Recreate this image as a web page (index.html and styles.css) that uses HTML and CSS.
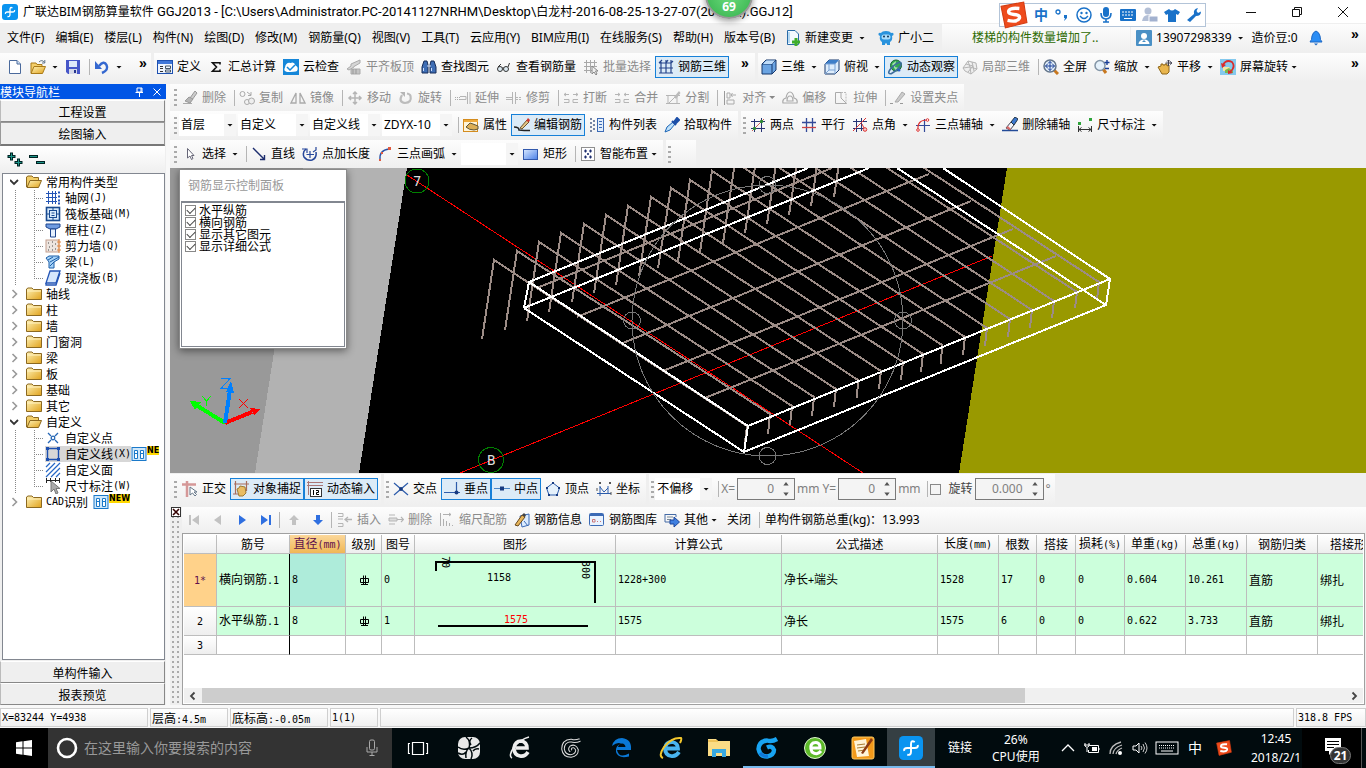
FILE: index.html
```html
<!DOCTYPE html>
<html lang="zh-CN">
<head>
<meta charset="utf-8">
<title>广联达BIM钢筋算量软件 GGJ2013</title>
<link rel="stylesheet" href="styles.css">
</head>
<body>
<svg class="defs" aria-hidden="true">
  <defs>
    <linearGradient id="gf" x1="0" y1="0" x2="1" y2="1"><stop offset="0" stop-color="#fff3b8"/><stop offset="1" stop-color="#e0a21c"/></linearGradient>
    <linearGradient id="gb" x1="0" y1="0" x2="1" y2="1"><stop offset="0" stop-color="#d9e9ff"/><stop offset="1" stop-color="#4a80e8"/></linearGradient>
  </defs>
  <symbol id="app" viewBox="0 0 16 16"><rect width="16" height="16" rx="3" fill="#0a94f0"/><path d="M10.500 4Q8 2.500 8 5.500V10.500Q8 13 5.500 12.500M3.500 10Q3 8 5.500 8H10.500Q13 8 12.500 6" fill="none" stroke="#fff" stroke-width="1.300"/></symbol>
  <symbol id="new" viewBox="0 0 16 16"><path d="M2.500 1.500H10L13.500 5V14.500H2.500Z" fill="#fff" stroke="#4b6a9c"/><path d="M10 1.500V5H13.500" fill="#cfe0f5" stroke="#4b6a9c"/></symbol>
  <symbol id="open" viewBox="0 0 16 16"><path d="M1 14V4H6L7 5.500H12V8" fill="#f4cf6a" stroke="#a97a18"/><path d="M1 14.500L4 7.500H15.500L12.500 14.500Z" fill="url(#gf)" stroke="#a97a18"/><path d="M9 3Q12 0 14.500 3.500M14.800 1V4H12" fill="none" stroke="#5d7187"/></symbol>
  <symbol id="save" viewBox="0 0 16 16"><path d="M1 1H15V15H3L1 13Z" fill="#4656c8"/><rect x="4" y="2" width="8" height="6" fill="#dfe8fa"/><rect x="4" y="10" width="8" height="5" fill="#d6d9e8"/><rect x="9" y="11" width="2" height="3" fill="#27358e"/></symbol>
  <symbol id="undo" viewBox="0 0 16 16"><path d="M5 7Q10 1 12.500 6T8 14" fill="none" stroke="#3568d0" stroke-width="2.500"/><path d="M1 2V10H8Z" fill="#3568d0"/></symbol>
  <symbol id="define" viewBox="0 0 16 16"><rect x=".5" y="1.500" width="15" height="13" fill="#eef4fd" stroke="#1d50b0"/><rect x="1" y="2" width="14" height="3" fill="#3f76d8"/><path d="M3 7.500H6M3 9.500H6M3 12.500H6" stroke="#333"/><path d="M8.500 7H13.500V9.500H8.500ZM8.500 11H13.500V13H8.500Z" fill="none" stroke="#456"/></symbol>
  <symbol id="sigma" viewBox="0 0 16 16"><path d="M12 5.500V3.700H4.500L8.500 8L4.500 12.300H12V10.500" fill="none" stroke="#111" stroke-width="1.600"/></symbol>
  <symbol id="cloud" viewBox="0 0 16 16"><rect width="16" height="16" fill="#1687d9"/><path d="M4 13Q0 12 2 8.500Q3 3 7.500 4Q11 2 12.500 6.500Q16 8 14 12Q12 13 4 13Z" fill="#fff"/><path d="M4 8L7 11L12 6" fill="none" stroke="#1687d9" stroke-width="1.500"/></symbol>
  <symbol id="slab" viewBox="0 0 16 16"><path d="M1 10L5 7V5L14 1V4L8 7.500V8L3 11Z" fill="#d5d5d5" stroke="#aaa"/><path d="M5 10H14V15H5Z" fill="#c4c4c4" stroke="#aaa"/><path d="M7 10V15M10 10V15" stroke="#999"/></symbol>
  <symbol id="bino" viewBox="0 0 16 16"><path d="M3 2H6L7 6V14H1V8ZM10 2H13L15 8V14H9V6Z" fill="#3f6eb5" stroke="#162c58"/><path d="M6 7H10M2.500 9V12M10.500 9V12" stroke="#cfe0ff"/></symbol>
  <symbol id="glass" viewBox="0 0 16 16"><circle cx="4" cy="10" r="2.500" fill="#dceaf2" stroke="#333"/><circle cx="10" cy="10" r="2.500" fill="#dceaf2" stroke="#333"/><path d="M6.500 9Q7 8 7.500 9M2 8L5 5M12 8L13.500 4" fill="none" stroke="#333"/></symbol>
  <symbol id="batch" viewBox="0 0 16 16"><path d="M1 3.500H14M1 7.500H14M1 11.500H9M3.500 1V14M7.500 1V14M11.500 1V8" stroke="#a8a8a8" fill="none"/><path d="M9 7V15L11 13L13 16L14 15L12.500 12H15Z" fill="#eee" stroke="#888"/></symbol>
  <symbol id="cage" viewBox="0 0 16 16"><path d="M1 4H13M1 9H15M1 14H15M3 3V14M8 1V14M13 1V14M1 4L4 1M8 4L10 1M13 4L15 2" fill="none" stroke="#26458b" stroke-width="1.200"/></symbol>
  <symbol id="cube" viewBox="0 0 16 16"><path d="M1 5L5 1H15V11L11 15H1Z" fill="#6ba4e2" stroke="#17386d"/><path d="M1 5H11V15M11 5L15 1" fill="none" stroke="#17386d"/><path d="M2 5L5.500 1.500H14L11 5Z" fill="#bfdcf8"/></symbol>
  <symbol id="top" viewBox="0 0 16 16"><path d="M1 5L5 1H15V11L11 15H1Z" fill="#deedfc" stroke="#17386d"/><path d="M1 5L5 1H15L11 5Z" fill="#3e7fc9"/><path d="M11 5V15M1 5H11L15 1M5 5V11H11M5 11L1 15" fill="none" stroke="#7aa3d5"/></symbol>
  <symbol id="orbit" viewBox="0 0 16 16"><circle cx="9" cy="6.500" r="5.500" fill="#32a852" stroke="#176630"/><path d="M5 5L9 2L8 8L12 9L9 12Z" fill="#a5e3a8"/><ellipse cx="8" cy="9" rx="8" ry="2.500" transform="rotate(-42 8 9)" fill="none" stroke="#3d6d9e" stroke-width="1.500"/><circle cx="12" cy="11" r="1.500" fill="#2c5cc0"/></symbol>
  <symbol id="local" viewBox="0 0 16 16"><path d="M1 9L6 2L14 4L15 10L9 15L3 12ZM6 2L8 8L15 10M1 9L8 8L9 15M4 5L11 7L12 12M10 3L11 7L6 13" fill="#eee" stroke="#b5b5b5"/></symbol>
  <symbol id="full" viewBox="0 0 16 16"><path d="M11 11L15 15" stroke="#c87820" stroke-width="3"/><circle cx="7" cy="7" r="6" fill="#e5f1fb" stroke="#63758a" stroke-width="1.500"/><path d="M7 2.500V11.500M2.500 7H11.500M5 4.500L7 2.500L9 4.500M5 9.500L7 11.500L9 9.500M4.500 5L2.500 7L4.500 9M9.500 5L11.500 7L9.500 9" fill="none" stroke="#173d96"/></symbol>
  <symbol id="zoom" viewBox="0 0 16 16"><path d="M9 10L12 14" stroke="#c87820" stroke-width="3"/><circle cx="6" cy="6.500" r="5" fill="#e5f1fb" stroke="#8395a6" stroke-width="1.500"/><path d="M13 1V6M10.500 3.500H15.500M11 9.500H15" stroke="#173d96" stroke-width="1.400"/></symbol>
  <symbol id="pan" viewBox="0 0 16 16"><path d="M1 8L4 7V5H6V6H8V5H10V7L12 6V13L10 15H5Z" fill="#e9b64e" stroke="#8f671a"/><path d="M11.500 1V7M8.500 4H14.500M10 2.500L11.500 1L13 2.500M13 2.500L15 4L13 5.500" fill="none" stroke="#445"/></symbol>
  <symbol id="rot" viewBox="0 0 16 16"><rect width="16" height="16" fill="#84c9ee"/><path d="M3 8H9L12 12H3Z" fill="#f4e6a0"/><path d="M5 11L9 9L13 12V14H5Z" fill="#7ab852"/><path d="M3 6Q6 0 12 3Q16 8 10 13" fill="none" stroke="#d92b2b" stroke-width="1.700"/><path d="M1 4L2 9L6 6ZM8 11L13 14L8 15Z" fill="#d92b2b"/></symbol>
  <symbol id="gerase" viewBox="0 0 16 16"><path d="M1 13.500H10" stroke="#aaa"/><path d="M8 8L13 1L15 3L10 10Z" fill="#ccc" stroke="#999"/><path d="M3 11L7 7L11 9L8 13Z" fill="#b5b5b5" stroke="#999"/></symbol>
  <symbol id="gcopy" viewBox="0 0 16 16"><circle cx="3.500" cy="4" r="2.500" fill="none" stroke="#aaa"/><circle cx="8" cy="12" r="2.500" fill="none" stroke="#aaa"/><circle cx="12.500" cy="11" r="3" fill="#eee" stroke="#aaa"/><path d="M8 2L12 5M12 2V5.500H9" fill="none" stroke="#aaa"/></symbol>
  <symbol id="gmirror" viewBox="0 0 16 16"><path d="M6 3V13H1ZM10 3V13H15Z" fill="none" stroke="#aaa" stroke-width="1.300"/></symbol>
  <symbol id="gmove" viewBox="0 0 16 16"><path d="M8 2V14M2 8H14M6 4L8 2L10 4M6 12L8 14L10 12M4 6L2 8L4 10M12 6L14 8L12 10" fill="none" stroke="#b5b5b5" stroke-width="1.500"/></symbol>
  <symbol id="grot" viewBox="0 0 16 16"><path d="M4 5Q0 12 7 13Q14 12.500 12.500 6Q12 4 9 3.500" fill="none" stroke="#bcbcbc" stroke-width="2.200"/><path d="M2 2H7V7Z" fill="#b5b5b5"/></symbol>
  <symbol id="gext" viewBox="0 0 16 16"><path d="M0 7.500H5M0 9.500H5" stroke="#aaa" stroke-dasharray="1 1"/><path d="M5 6.500H11V9.500H5M12.500 2V14M15 2V14" fill="none" stroke="#b5b5b5"/></symbol>
  <symbol id="gtrim" viewBox="0 0 16 16"><path d="M0 7.500H6M0 9.500H6M6.500 2V14M9.500 2V14" fill="none" stroke="#b5b5b5"/><path d="M10 7.500H16M10 9.500H16" stroke="#b5b5b5" stroke-dasharray="2 1"/></symbol>
  <symbol id="gbreak" viewBox="0 0 16 16"><path d="M1 4.500H6M3 3L1 4.500L3 6M10 4.500H15M13 3L15 4.500L13 6M1 9.500H6V12.500H1M15 9.500H10V12.500H15" fill="none" stroke="#b5b5b5"/></symbol>
  <symbol id="gjoin" viewBox="0 0 16 16"><path d="M1 4.500H6M4 3L6 4.500L4 6M10 4.500H15M12 3L10 4.500L12 6M1 9.500H6V12.500H1M15 9.500H10V12.500H15" fill="none" stroke="#b5b5b5"/></symbol>
  <symbol id="gsplit" viewBox="0 0 16 16"><path d="M1 5.500H15M1 13.500H15M3 5V13M12 5V13M4 13L14 3" fill="none" stroke="#b5b5b5"/><path d="M9 7L14 1L15.500 3L11 9Z" fill="#bbb"/></symbol>
  <symbol id="galign" viewBox="0 0 16 16"><path d="M2.500 1V15" stroke="#999"/><path d="M5 3H8V8H5ZM5 10H12V14H5ZM14 5H9M10.500 3L9 5L10.500 7" fill="none" stroke="#aaa"/></symbol>
  <symbol id="goff" viewBox="0 0 16 16"><path d="M1 13Q0 9 4 8Q5 2 8 2Q11 2 12 8Q16 9 15 13ZM5 11Q5 6 8 6Q11 6 11 11Z" fill="none" stroke="#aaa" stroke-width="1.200"/></symbol>
  <symbol id="gstr" viewBox="0 0 16 16"><path d="M2.500 2.500H8V8L13.500 13.500H2.500Z" fill="none" stroke="#aaa"/><path d="M8 2.500H13V13" fill="none" stroke="#bbb" stroke-dasharray="2 1"/></symbol>
  <symbol id="ggrip" viewBox="0 0 16 16"><path d="M0 13.500H3M10 13.500H13" stroke="#999"/><path d="M5 12L12 2L15 4L8 12Z" fill="#ccc" stroke="#aaa"/></symbol>
  <symbol id="prop" viewBox="0 0 16 16"><rect x=".5" y="2.500" width="14" height="12" fill="#fff4d8" stroke="#d48c1e"/><path d="M1 3H15V5H1Z" fill="#efaa3a"/><path d="M3 10L7 6L10 7L15 9V12L11 13Q6 13 3 10Z" fill="#dcae55" stroke="#5d5438"/></symbol>
  <symbol id="edit" viewBox="0 0 16 16"><path d="M0 10Q5 10 5 13Q10 13.500 16 13.500" fill="none" stroke="#222" stroke-width="1.500"/><path d="M6 11L13 3L15 5L8 12Z" fill="#e2c487" stroke="#70562c"/><path d="M12 4L14 1L16 3L15 5Z" fill="#cf362e"/></symbol>
  <symbol id="list" viewBox="0 0 16 16"><path d="M1 2H3M1 6H3M1 10H3M1 14H3M4 4H6M4 8H6M4 12H6" stroke="#4a5f88" stroke-width="1.300"/><rect x="8.500" y="1.500" width="6" height="13" fill="#e2edfa" stroke="#3b6ab5"/><path d="M10 4.500H13M10 7.500H13M10 10.500H13" stroke="#3b6ab5"/></symbol>
  <symbol id="pick" viewBox="0 0 16 16"><path d="M1 15L3 10L9 5L11 7L6 13Z" fill="#bfe1fa" stroke="#1b65b6"/><path d="M8 4L12 8M10 5L13 1L15 3L12 6Z" fill="#1c4fa8" stroke="#1c4fa8" stroke-width="2"/></symbol>
  <symbol id="twop" viewBox="0 0 16 16"><path d="M1 4.500H15M1 11.500H15M4.500 2V15M11.500 1V15" stroke="#273374"/><path d="M2 14L14 2" stroke="#cf5f57"/><circle cx="4.500" cy="11.500" r="1.700" fill="#2b8a36"/><circle cx="11.500" cy="4.500" r="1.700" fill="#2b8a36"/></symbol>
  <symbol id="para" viewBox="0 0 16 16"><path d="M1 5.500H15M5.500 1V15M11.500 1V15" stroke="#334a99" stroke-width="1.300"/><path d="M1 10.500H15" stroke="#c44" stroke-width="1.300"/></symbol>
  <symbol id="ang" viewBox="0 0 16 16"><path d="M1 4.500H15M1 11.500H12M4.500 2V15M9.500 1V14" stroke="#273374"/><path d="M1 14L14 1M10 7L13 13" stroke="#d33"/><circle cx="13" cy="12.500" r="1.800" fill="#f5c8c8" stroke="#d33"/></symbol>
  <symbol id="arcx" viewBox="0 0 16 16"><path d="M1 8.500H15M9.500 2V15" stroke="#334a99" stroke-width="1.200"/><path d="M3 13Q2 3 12 3" fill="none" stroke="#d33" stroke-width="1.200"/><circle cx="3" cy="13" r="1.300" fill="#fff" stroke="#d33"/><circle cx="12.500" cy="3" r="1.300" fill="#fff" stroke="#d33"/></symbol>
  <symbol id="delx" viewBox="0 0 16 16"><path d="M0 13.500H16" stroke="#234b98" stroke-width="1.500"/><path d="M4 11L9 5L12 8L8 13Z" fill="#f2f5fb" stroke="#445"/><path d="M9 5L13 0L16 2L12 8Z" fill="#3b78d0" stroke="#234"/><path d="M4 11L6 9L9 12L8 13Z" fill="#db6a6a"/></symbol>
  <symbol id="dim" viewBox="0 0 16 16"><path d="M1.500 9V15M14.500 9V15M2 12.500H14M4.500 10.500L2 12.500L4.500 14.500M11.500 10.500L14 12.500L11.500 14.500" fill="none" stroke="#333"/><path d="M1 5H4V8H1ZM12 1H15V4H12Z" fill="#2da43a"/></symbol>
  <symbol id="cur" viewBox="0 0 16 16"><path d="M5.500 2.500V12L8 10L9.500 13.500L11 12.500L9.500 9.500H12Z" fill="#fff" stroke="#667"/></symbol>
  <symbol id="line" viewBox="0 0 16 16"><path d="M2 2L13 13M13.500 9V13.500H9" fill="none" stroke="#1d2d6e" stroke-width="1.400"/></symbol>
  <symbol id="plen" viewBox="0 0 16 16"><path d="M4 3Q0 6 2 11Q5 15 10 14Q15 12 14 6" fill="none" stroke="#26479b" stroke-width="1.500"/><path d="M0 3H5V7M8 5V12M4.500 8.500H12M11 6L14 4V1" fill="none" stroke="#26479b" stroke-width="1.200"/></symbol>
  <symbol id="arc" viewBox="0 0 16 16"><path d="M3 14Q2 4 12 3" fill="none" stroke="#2a52a5" stroke-width="1.400"/><path d="M2 13H4V15H2ZM4 6H6V8H4ZM11 1H14V4H11Z" fill="#e05a40"/></symbol>
  <symbol id="rect" viewBox="0 0 16 16"><rect x=".5" y="3.500" width="14" height="10" fill="url(#gb)" stroke="#3259ad"/></symbol>
  <symbol id="smart" viewBox="0 0 16 16"><rect x="1.500" y="1.500" width="13" height="13" fill="#fff" stroke="#222" stroke-dasharray="1 1"/><path d="M4 5H7M5.500 3.500V6.500M9 5H12M10.500 3.500V6.500M4 11H7M5.500 9.500V12.500M9 11H12M10.500 9.500V12.500M8 7V9M7 8H9" stroke="#1d2d6e" stroke-width="1.200"/></symbol>
  <symbol id="newchg" viewBox="0 0 16 16"><path d="M2.500 .5H10L13.500 4V14.500H2.500Z" fill="#f4faff" stroke="#2a6ca8"/><path d="M4 2V13" stroke="#7cbbe8"/><path d="M11 8V16M7 12H15" stroke="#3fae2b" stroke-width="3"/></symbol>
  <symbol id="mascot" viewBox="0 0 16 16"><path d="M8 1Q12 1 13 3Q16 2 15.500 5L14 6Q15 10 12 12L12 15H9V13.500H7V15H4V12Q1 10 2 6L.5 5Q0 2 3 3Q4 1 8 1Z" fill="#2a93dd"/><rect x="3.500" y="4.500" width="9" height="5" rx="2.500" fill="#a9dcfb"/><circle cx="6" cy="6.500" r="1" fill="#135"/><circle cx="10" cy="6.500" r="1" fill="#135"/></symbol>
  <symbol id="user" viewBox="0 0 16 16"><rect width="16" height="16" rx="1" fill="#4a90c5"/><circle cx="8" cy="6" r="3" fill="#fff"/><path d="M2.500 14Q3 9.500 8 9.500T13.500 14Z" fill="#fff"/><path d="M8 10L6 12H10Z" fill="#4a90c5"/></symbol>
  <symbol id="bell" viewBox="0 0 16 16"><path d="M2 12Q4 10 4 6Q5 2 8 1Q11 2 12 6Q12 10 14 12Z" fill="#2a8df5" stroke="#1b67c4"/><path d="M6 13.500H10L8 15.500Z" fill="#1b67c4"/></symbol>
  <symbol id="ortho" viewBox="0 0 16 16"><path d="M0 3.500H14M5 0V16" stroke="#d59898" stroke-width="2.500"/><path d="M8 6V14L10.500 12L13 15L14.500 13.500L12 11H15Z" fill="#fff" stroke="#678"/></symbol>
  <symbol id="snap" viewBox="0 0 16 16"><path d="M1 3H16M2.500 0V13M13.500 0V10" stroke="#a96d5c" stroke-width="1.200"/><path d="M4 8L6 7L7 5L12 6L13 12L10 15H6Z" fill="#e9bd64" stroke="#9e7a34"/><path d="M0 13H5" stroke="#a96d5c"/></symbol>
  <symbol id="dyn" viewBox="0 0 16 16"><path d="M0 1.500H16M0 4.500H16M1.500 0V14" stroke="#a77"/><rect x="3.500" y="7.500" width="11" height="8" fill="#fff" stroke="#333"/><path d="M6.500 9V14M9 9.500H11.500V11.500H9.500V13.500H12" fill="none" stroke="#000"/></symbol>
  <symbol id="cross" viewBox="0 0 16 16"><path d="M1 2L15 14M15 2L1 14" stroke="#2d5cab" stroke-width="1.200"/><circle cx="8" cy="8" r="1.900" fill="#173a80"/></symbol>
  <symbol id="perp" viewBox="0 0 16 16"><path d="M0 11.500H16M12.500 1V12" stroke="#2d5cab" stroke-width="1.200"/><circle cx="12.500" cy="11.500" r="2" fill="#173a80"/></symbol>
  <symbol id="mid" viewBox="0 0 16 16"><path d="M0 7.500H16" stroke="#4b86c6"/><rect x="6" y="5.500" width="4" height="4" fill="#173a80"/></symbol>
  <symbol id="vert" viewBox="0 0 16 16"><path d="M8 2L14.500 7L12 14H4L1.500 7Z" fill="#e6f1fb" stroke="#2d5cab"/><path d="M7 1H9V3H7ZM1 6H3V8H1ZM13 6H15V8H13ZM3 13H5V15H3ZM11 13H13V15H11Z" fill="#173a80"/></symbol>
  <symbol id="coord" viewBox="0 0 16 16"><path d="M4 5V15M1 12.500H15M12 5V12M12 7L8 11L4 6" fill="none" stroke="#2d5cab"/><path d="M3 1L5 3M5 1L3 3M13 1L15 3M15 1L13 3M1 7V10M15 11V14" stroke="#555"/></symbol>
  <symbol id="gins" viewBox="0 0 16 16"><path d="M1 1.500H6V4.500H1M1 11.500H6V14.500H1M1 7H6" fill="none" stroke="#b5b5b5"/><path d="M15 7.500H8M11 5L8 7.500L11 10" fill="none" stroke="#b5b5b5" stroke-width="1.300"/></symbol>
  <symbol id="gdel" viewBox="0 0 16 16"><path d="M1 3H7M1 12H7M1 6H9V9H1Z" fill="#ddd" stroke="#b5b5b5"/><path d="M9 7.500H15M13 5L15.500 7.500L13 10" fill="none" stroke="#b5b5b5" stroke-width="1.200"/></symbol>
  <symbol id="gscale" viewBox="0 0 16 16"><path d="M1.500 1V14M4 2.500H12M10 1L12 2.500L10 4M4.500 7V14M7.500 9V14M10.500 11V14M13.500 13V14" fill="none" stroke="#b0b0b0"/></symbol>
  <symbol id="info" viewBox="0 0 16 16"><path d="M6 4L15 2V13L8 15Z" fill="#dcecff" stroke="#3b6ab5"/><path d="M1 13L8 3L11 5L4 14Z" fill="#e8b65a" stroke="#67481c"/><path d="M8 3L10 1L12 3L11 5Z" fill="#444"/><path d="M10 9L14 14" stroke="#3b6ab5"/></symbol>
  <symbol id="lib" viewBox="0 0 16 16"><rect x=".5" y="1.500" width="14" height="12" rx="1" fill="#e9f3ff" stroke="#3b6ab5"/><path d="M1 3H14" stroke="#3b6ab5" stroke-width="2"/><path d="M3.500 7.500H6V10H3.500ZM8 9.500H9M11 9.500H12" stroke="#c77" fill="none"/></symbol>
  <symbol id="other" viewBox="0 0 16 16"><path d="M1 2.500H12V5M1 2V10H6" fill="none" stroke="#456ba5"/><path d="M3 5H9M3 7.500H7" stroke="#789"/><path d="M6 8H10V5L15.500 10L10 15V12H6Z" fill="#3f7fe0" stroke="#1c479b"/></symbol>
  <symbol id="fc" viewBox="0 0 16 16"><path d="M.5 13.500V3L2 2H6L7.500 3.500H15.500V13.500Z" fill="url(#gf)" stroke="#8c6920"/><path d="M1 5H15" stroke="#fff3c4"/></symbol>
  <symbol id="fo" viewBox="0 0 16 16"><path d="M.5 13V3L2 2H6L7.500 3.500H12.500V6" fill="#f1cd68" stroke="#8c6920"/><path d="M1 13.500L4 6.500H15.500L12.500 13.500Z" fill="url(#gf)" stroke="#8c6920"/></symbol>
  <symbol id="t1" viewBox="0 0 16 16"><path d="M1 3.500H12M1 7.500H12M1 11.500H12M3.500 1V14M7.500 1V14M10.500 1V14" stroke="#2455b5"/><path d="M13 2.500H15M13 6.500H15M13 10.500H15M13 13.500H15" stroke="#2455b5" stroke-width="2"/></symbol>
  <symbol id="t2" viewBox="0 0 16 16"><rect x="1.500" y="1.500" width="13" height="13" fill="#d8eafb" stroke="#184a90" stroke-width="1.600"/><rect x="4.500" y="4.500" width="7" height="7" fill="none" stroke="#184a90"/><path d="M8 2V5M8 11V14M2 8H5M11 8H14M6.500 7H9.500M6.500 9.500H9.500" stroke="#184a90"/></symbol>
  <symbol id="t3" viewBox="0 0 16 16"><path d="M1 2H15V5L11 7H5L1 5Z" fill="#6f9be0" stroke="#1d448e"/><path d="M5.500 7H10.500V15H5.500Z" fill="#e4effd" stroke="#1d448e"/></symbol>
  <symbol id="t4" viewBox="0 0 16 16"><rect x="1" y="2" width="13" height="12" fill="#ede5e0" stroke="#c49f8e"/><path d="M3 5H4M7 4H8M10 6H11M4 9H5M7 8H8M10 11H11M3 12H4M7 12H8" stroke="#444"/><path d="M14 1V15M12 4H16M12 8H16M12 12H16" stroke="#e28842"/></symbol>
  <symbol id="t5" viewBox="0 0 16 16"><path d="M1 4L4 2H14V5L9 8V14H4V8Z" fill="#a7d3f8" stroke="#1d5ea8"/><path d="M3 6L8 3M5 8L14 3M5 12L9 8" stroke="#1d5ea8"/></symbol>
  <symbol id="t6" viewBox="0 0 16 16"><path d="M5 1H15L11 13H1Z" fill="#d6e7fc" stroke="#2455b5" stroke-width="1.300"/><path d="M1 13V15H11L15 3" fill="none" stroke="#2455b5" stroke-width="1.300"/></symbol>
  <symbol id="c1" viewBox="0 0 16 16"><path d="M3 3L6 6M13 3L10 6M3 13L6 10M13 13L10 10" stroke="#2667b5" stroke-width="1.300"/><circle cx="8" cy="8" r="1.800" fill="none" stroke="#2667b5" stroke-width="1.300"/></symbol>
  <symbol id="c2" viewBox="0 0 16 16"><path d="M2.500 2.500H13.500V13.500H2.500Z" fill="#d7d7d7" stroke="#1d50b0" stroke-width="1.400"/><path d="M1 1H4V4H1ZM12 1H15V4H12ZM1 12H4V15H1ZM12 12H15V15H12Z" fill="#1d50b0"/></symbol>
  <symbol id="c3" viewBox="0 0 16 16"><path d="M1 5L5 1M1 10L10 1M1 15L15 1M6 15L15 6M11 15L15 11" stroke="#2667c5" stroke-width="1.200"/></symbol>
  <symbol id="c4" viewBox="0 0 16 16"><path d="M1.500 0V5M14.500 0V5M1 2.500H15M5.500 0V4M10.500 0V4" stroke="#222"/><path d="M6 3V14L9 11L11 16L13 15L11 10.500H15Z" fill="#aaa" stroke="#777"/></symbol>
  <symbol id="book" viewBox="0 0 16 16"><rect x="1" y="1.500" width="14" height="13" fill="#cfe8fb" stroke="#1b79c9"/><path d="M3.500 4.500H6.500V12.500H3.500ZM9.500 4.500H12.500V12.500H9.500Z" fill="#fff" stroke="#1b79c9"/><path d="M4 7.500H6M10 7.500H12" stroke="#1b79c9"/></symbol>
  <symbol id="sogou" viewBox="0 0 26 26"><path d="M1 5L22 1L25 20L5 25Z" fill="#ee4b1c" stroke="#d33c12"/><path d="M18 7Q8 6 8 10Q8 12 13 12.500Q19 13 18 16Q16 20 7 18" fill="none" stroke="#fff" stroke-width="3.200"/></symbol>
  <symbol id="chev" viewBox="0 0 10 10"><path d="M2.500 1L6.500 5L2.500 9" fill="none" stroke="#999" stroke-width="1.600"/></symbol>
  <symbol id="chevd" viewBox="0 0 10 10"><path d="M0 3L4 7L8 3" fill="none" stroke="#333" stroke-width="1.800"/></symbol>
  <symbol id="grade" viewBox="0 0 12 12"><path d="M1.500 4.500H9.500V8.500H1.500Z" fill="none" stroke="#000"/><path d="M4.500 1.500V11M6.500 1.500V11M2 10.500H9" stroke="#000"/></symbol>
</svg>

<div class="app">
  <header class="title">
    <svg class="i"><use href="#app"/></svg>
    <h1>广联达BIM钢筋算量软件 <span class="la">GGJ2013 - [C:\Users\Administrator.PC-20141127NRHM\Desktop\</span>白龙村<span class="la">-2016-08-25-13-27-07(2016</span>版<span class="la">).GGJ12]</span></h1>
    <div class="winbtns">
      <button aria-label="最小化"><svg viewBox="0 0 12 12"><path d="M1 6.500H11" stroke="#111"/></svg></button>
      <button aria-label="还原"><svg viewBox="0 0 12 12"><path d="M1.500 3.500H8.500V10.500H1.500ZM3.500 3.500V1.500H10.500V8.500H8.500" fill="none" stroke="#111"/></svg></button>
      <button aria-label="关闭"><svg viewBox="0 0 12 12"><path d="M1 1L11 11M11 1L1 11" stroke="#111"/></svg></button>
    </div>
    <div class="ball">69</div>
    <div class="ime">
      <svg class="s" viewBox="0 0 26 26"><use href="#sogou"/></svg>
      <b>中</b>
      <svg class="i" viewBox="0 0 16 16"><circle cx="4" cy="5" r="2" fill="none" stroke="#1a72c9" stroke-width="1.300"/><path d="M10 8H13V11L10 14L11 11H10Z" fill="#1a72c9"/></svg>
      <svg class="i" viewBox="0 0 16 16"><circle cx="8" cy="8" r="7" fill="none" stroke="#1a72c9" stroke-width="1.500"/><circle cx="5.500" cy="6" r="1.200" fill="#1a72c9"/><circle cx="10.500" cy="6" r="1.200" fill="#1a72c9"/><path d="M4 9Q8 14 12 9" fill="none" stroke="#1a72c9" stroke-width="1.400"/></svg>
      <svg class="i" viewBox="0 0 16 16"><rect x="5" y="0" width="6" height="10" rx="3" fill="#1a72c9"/><path d="M3 6Q3 12 8 12T13 6M8 12V15M5 15H11" fill="none" stroke="#1a72c9" stroke-width="1.600"/></svg>
      <svg class="i" viewBox="0 0 16 16"><rect x="0" y="2" width="16" height="12" rx="1" fill="#1a72c9"/><path d="M2 5H14M2 8H14" stroke="#fff" stroke-dasharray="2 1"/><path d="M4 11.500H12" stroke="#fff"/></svg>
      <svg class="i" viewBox="0 0 16 16"><circle cx="6" cy="4" r="3.500" fill="#b3bfd6"/><path d="M0 14Q1 8 6 8T11 14Z" fill="#b3bfd6"/><rect x="7" y="9" width="9" height="6" fill="#a2b1cf" stroke="#fff"/></svg>
      <svg class="i" viewBox="0 0 16 16"><path d="M5 2Q8 5 11 2L16 5L14 8L12 7V15H4V7L2 8L0 5Z" fill="#1a72c9"/></svg>
      <svg class="i" viewBox="0 0 16 16"><path d="M1 13L8 7Q7 2 12 1L10.500 4L12 6L15 4.500Q15 9 10 9L4 15Z" fill="#1a72c9"/></svg>
    </div>
  </header>

  <nav class="menu">
    <a href="#">文件(F)</a><a href="#">编辑(E)</a><a href="#">楼层(L)</a><a href="#">构件(N)</a><a href="#">绘图(D)</a><a href="#">修改(M)</a><a href="#">钢筋量(Q)</a><a href="#">视图(V)</a><a href="#">工具(T)</a><a href="#">云应用(Y)</a><a href="#">BIM应用(I)</a><a href="#">在线服务(S)</a><a href="#">帮助(H)</a><a href="#">版本号(B)</a>
    <button class="t"><svg class="i"><use href="#newchg"/></svg>新建变更<i class="car"></i></button>
    <button class="t"><svg class="i"><use href="#mascot"/></svg>广小二</button>
    <div class="bar tip"><a href="#">楼梯的构件数量增加了..</a></div>
    <div class="bar grow acct">
      <button class="t"><svg class="i"><use href="#user"/></svg>13907298339<i class="car"></i></button>
      <span class="beans">造价豆:0</span>
      <svg class="i"><use href="#bell"/></svg>
      <button class="more" aria-label="更多">»</button>
    </div>
  </nav>

  <div class="row r1">
    <div class="bar">
      <button class="t"><svg class="i"><use href="#new"/></svg></button>
      <button class="t"><svg class="i"><use href="#open"/></svg><i class="car"></i></button>
      <button class="t"><svg class="i"><use href="#save"/></svg></button><i class="sep"></i>
      <button class="t"><svg class="i"><use href="#undo"/></svg><i class="car"></i></button>
      <button class="more" aria-label="更多">»</button>
    </div>
    <div class="bar b2">
      <button class="t"><svg class="i"><use href="#define"/></svg>定义</button>
      <button class="t"><svg class="i"><use href="#sigma"/></svg>汇总计算</button>
      <button class="t"><svg class="i"><use href="#cloud"/></svg>云检查</button>
      <button class="t" disabled><svg class="i"><use href="#slab"/></svg>平齐板顶</button>
      <button class="t"><svg class="i"><use href="#bino"/></svg>查找图元</button>
      <button class="t"><svg class="i"><use href="#glass"/></svg>查看钢筋量</button>
      <button class="t" disabled><svg class="i"><use href="#batch"/></svg>批量选择</button>
      <button class="t on"><svg class="i"><use href="#cage"/></svg>钢筋三维</button>
      <button class="more" aria-label="更多">»</button>
    </div>
    <div class="bar grow">
      <button class="t"><svg class="i"><use href="#cube"/></svg>三维<i class="car"></i></button>
      <button class="t"><svg class="i"><use href="#top"/></svg>俯视<i class="car"></i></button>
      <button class="t on"><svg class="i"><use href="#orbit"/></svg>动态观察</button>
      <button class="t" disabled><svg class="i"><use href="#local"/></svg>局部三维</button><i class="sep"></i>
      <button class="t"><svg class="i"><use href="#full"/></svg>全屏</button>
      <button class="t"><svg class="i"><use href="#zoom"/></svg>缩放<i class="car"></i></button>
      <button class="t"><svg class="i"><use href="#pan"/></svg>平移<i class="car"></i></button>
      <button class="t"><svg class="i"><use href="#rot"/></svg>屏幕旋转<i class="car n"></i></button>
      <button class="more" aria-label="更多">»</button>
    </div>
  </div>

  <div class="main">
    <aside class="side">
      <div class="shead"><span>模块导航栏</span><button aria-label="固定"><svg viewBox="0 0 10 10"><path d="M3 1H8V5H3ZM1.500 5.500H9M5.500 6V10M7 1V5" fill="none" stroke="#fff"/></svg></button><button aria-label="关闭"><svg viewBox="0 0 10 10"><path d="M1.500 1.500L8.500 8.500M8.500 1.500L1.500 8.500" stroke="#fff"/></svg></button></div>
      <button class="sb">工程设置</button>
      <button class="sb act">绘图输入</button>
      <div class="stools">
        <button aria-label="全部展开"><svg viewBox="0 0 16 16"><path d="M4.500 .5V8.500M.5 4.500H8.500M11.500 6.500V14.500M7.500 10.500H15.500" stroke="#022" stroke-width="3"/><path d="M4.500 1.500V7.500M1.500 4.500H7.500M11.500 7.500V13.500M8.500 10.500H14.500" stroke="#1d9488"/></svg></button>
        <button aria-label="全部折叠"><svg viewBox="0 0 16 16"><path d="M0 4.500H9M7 10.500H16" stroke="#022" stroke-width="3"/><path d="M1 4.500H8M8 10.500H15" stroke="#1d9488"/></svg></button>
      </div>
      <ul class="tree">
        <li class="open"><div class="n"><svg class="cv"><use href="#chevd"/></svg><svg class="i"><use href="#fo"/></svg>常用构件类型</div>
          <ul>
            <li><svg class="i"><use href="#t1"/></svg>轴网<span class="m">(J)</span></li>
            <li><svg class="i"><use href="#t2"/></svg>筏板基础<span class="m">(M)</span></li>
            <li><svg class="i"><use href="#t3"/></svg>框柱<span class="m">(Z)</span></li>
            <li><svg class="i"><use href="#t4"/></svg>剪力墙<span class="m">(Q)</span></li>
            <li><svg class="i"><use href="#t5"/></svg>梁<span class="m">(L)</span></li>
            <li><svg class="i"><use href="#t6"/></svg>现浇板<span class="m">(B)</span></li>
          </ul></li>
        <li><div class="n"><svg class="cv"><use href="#chev"/></svg><svg class="i"><use href="#fc"/></svg>轴线</div></li>
        <li><div class="n"><svg class="cv"><use href="#chev"/></svg><svg class="i"><use href="#fc"/></svg>柱</div></li>
        <li><div class="n"><svg class="cv"><use href="#chev"/></svg><svg class="i"><use href="#fc"/></svg>墙</div></li>
        <li><div class="n"><svg class="cv"><use href="#chev"/></svg><svg class="i"><use href="#fc"/></svg>门窗洞</div></li>
        <li><div class="n"><svg class="cv"><use href="#chev"/></svg><svg class="i"><use href="#fc"/></svg>梁</div></li>
        <li><div class="n"><svg class="cv"><use href="#chev"/></svg><svg class="i"><use href="#fc"/></svg>板</div></li>
        <li><div class="n"><svg class="cv"><use href="#chev"/></svg><svg class="i"><use href="#fc"/></svg>基础</div></li>
        <li><div class="n"><svg class="cv"><use href="#chev"/></svg><svg class="i"><use href="#fc"/></svg>其它</div></li>
        <li class="open"><div class="n"><svg class="cv"><use href="#chevd"/></svg><svg class="i"><use href="#fo"/></svg>自定义</div>
          <ul>
            <li><svg class="i"><use href="#c1"/></svg>自定义点</li>
            <li><span class="sel"><svg class="i"><use href="#c2"/></svg>自定义线<span class="m">(X)</span></span><svg class="i bk"><use href="#book"/></svg><em>NE</em></li>
            <li><svg class="i"><use href="#c3"/></svg>自定义面</li>
            <li><svg class="i"><use href="#c4"/></svg>尺寸标注<span class="m">(W)</span></li>
          </ul></li>
        <li><div class="n"><svg class="cv"><use href="#chev"/></svg><svg class="i"><use href="#fc"/></svg><span class="m">CAD</span>识别<svg class="i bk2"><use href="#book"/></svg><em>NEW</em></div></li>
      </ul>
      <button class="sb">单构件输入</button>
      <button class="sb">报表预览</button>
    </aside>

    <section class="work">
      <div class="row r2"><div class="bar">
        <i class="grip"></i>
        <button class="t" disabled><svg class="i"><use href="#gerase"/></svg>删除</button><i class="sep"></i>
        <button class="t" disabled><svg class="i"><use href="#gcopy"/></svg>复制</button>
        <button class="t" disabled><svg class="i"><use href="#gmirror"/></svg>镜像</button><i class="sep"></i>
        <button class="t" disabled><svg class="i"><use href="#gmove"/></svg>移动</button>
        <button class="t" disabled><svg class="i"><use href="#grot"/></svg>旋转</button><i class="sep"></i>
        <button class="t" disabled><svg class="i"><use href="#gext"/></svg>延伸</button>
        <button class="t" disabled><svg class="i"><use href="#gtrim"/></svg>修剪</button><i class="sep"></i>
        <button class="t" disabled><svg class="i"><use href="#gbreak"/></svg>打断</button>
        <button class="t" disabled><svg class="i"><use href="#gjoin"/></svg>合并</button>
        <button class="t" disabled><svg class="i"><use href="#gsplit"/></svg>分割</button><i class="sep"></i>
        <button class="t" disabled><svg class="i"><use href="#galign"/></svg>对齐<i class="car n"></i></button>
        <button class="t" disabled><svg class="i"><use href="#goff"/></svg>偏移</button>
        <button class="t" disabled><svg class="i"><use href="#gstr"/></svg>拉伸</button><i class="sep"></i>
        <button class="t" disabled><svg class="i"><use href="#ggrip"/></svg>设置夹点</button>
      </div></div>

      <div class="row r3">
        <div class="bar">
          <i class="grip"></i>
          <span class="combo w1"><select aria-label="楼层"><option>首层</option></select></span>
          <span class="combo w2"><select aria-label="构件类别"><option>自定义</option></select></span>
          <span class="combo w2"><select aria-label="构件类型"><option>自定义线</option></select></span>
          <span class="combo w2"><select aria-label="构件"><option>ZDYX-10</option></select></span><i class="sep"></i>
          <button class="t"><svg class="i"><use href="#prop"/></svg>属性</button>
          <button class="t on"><svg class="i"><use href="#edit"/></svg>编辑钢筋</button>
          <button class="t"><svg class="i"><use href="#list"/></svg>构件列表</button>
          <button class="t"><svg class="i"><use href="#pick"/></svg>拾取构件</button>
        </div>
        <div class="bar">
          <i class="grip"></i>
          <button class="t"><svg class="i"><use href="#twop"/></svg>两点</button>
          <button class="t"><svg class="i"><use href="#para"/></svg>平行</button>
          <button class="t"><svg class="i"><use href="#ang"/></svg>点角<i class="car"></i></button>
          <button class="t"><svg class="i"><use href="#arcx"/></svg>三点辅轴<i class="car"></i></button>
          <button class="t"><svg class="i"><use href="#delx"/></svg>删除辅轴</button>
          <button class="t"><svg class="i"><use href="#dim"/></svg>尺寸标注<i class="car"></i></button>
        </div>
      </div>

      <div class="row r4">
        <div class="bar">
          <i class="grip"></i>
          <button class="t"><svg class="i"><use href="#cur"/></svg>选择<i class="car"></i></button><i class="sep"></i>
          <button class="t"><svg class="i"><use href="#line"/></svg>直线</button>
          <button class="t"><svg class="i"><use href="#plen"/></svg>点加长度</button>
          <button class="t"><svg class="i"><use href="#arc"/></svg>三点画弧<i class="car"></i></button>
          <span class="combo w1"><select aria-label="画法"><option></option></select></span>
          <button class="t"><svg class="i"><use href="#rect"/></svg>矩形</button><i class="sep"></i>
          <button class="t"><svg class="i"><use href="#smart"/></svg>智能布置<i class="car n"></i></button>
        </div>
        <div class="bar empty"><i class="grip"></i></div>
      </div>

      <div class="view">
        <svg class="scene" viewBox="170 168 1196 305" preserveAspectRatio="xMinYMin slice" shape-rendering="crispEdges">
          <rect x="170" y="168" width="1196" height="305" fill="#999900"/>
          <path d="M170 168H1007L959 473H170Z" fill="#000"/>
          <path d="M170 168H407L359 473H170Z" fill="#b2b2b2"/>
          <path d="M170 168H303L255 473H170Z" fill="#999"/>
          <g fill="none" stroke="#f00"><path d="M407 175L863 473M460 473L992 256"/></g>
          <g fill="none" stroke="#9c8c86" stroke-width="2">
            <path d="M482 339L494 260L747 426L745 442"/>
            <path d="M505 330L517 251L770 414L768 434"/>
            <path d="M527 321L539 242L792 406L790 425"/>
            <path d="M549 312L561 233L814 397L812 416"/>
            <path d="M572 302L584 224L836 389L834 407"/>
            <path d="M594 293L606 215L858 380L857 398"/>
            <path d="M616 285L628 206L881 371L879 389"/>
            <path d="M639 276L651 197L903 362L901 380"/>
            <path d="M658 268L671 188L923 354L921 372"/>
            <path d="M678 261L690 180L942 345L941 364"/>
            <path d="M700 252L712 171L965 337L963 355"/>
            <path d="M723 243L735 162L987 328L985 346"/>
            <path d="M745 233L757 153L1010 319L1008 337"/>
            <path d="M767 224L779 144L1032 310L1030 328"/>
            <path d="M789 215L801 135L1054 301L1052 318"/>
            <path d="M811 206L823 126L1077 292L1075 308"/>
            <path d="M834 197L846 117L1099 282L1097 300"/>
            <path d="M705 398L1056 256M663 371L1013 229M623 343L971 201M577 317L929 174M537 288L832 168"/>
          </g>
          <g fill="none" stroke="#fff" stroke-width="2">
            <path d="M808 168L529 282L748 426L1110 279L943 168M524 308L744 452L1106 305L897 168M869 168L524 308M529 282L524 308M748 426L744 452M1110 279L1106 305"/>
          </g>
          <g fill="none" stroke="#777"><circle cx="767.500" cy="320.500" r="135.500"/><circle cx="767.500" cy="456" r="8.500"/><circle cx="767.500" cy="185" r="8.500"/><circle cx="632" cy="320.500" r="8.500"/><circle cx="903" cy="320.500" r="8.500"/></g>
          <g fill="none" stroke="#008000"><circle cx="417" cy="181" r="12"/><circle cx="491" cy="460" r="12.500"/></g>
          <text class="ax" x="413" y="186">7</text><text class="ax" x="487" y="465">B</text>
          <g stroke-width="4"><path d="M225 423L196 405" stroke="#0f0"/><path d="M225 423L252 412" stroke="#f00"/><path d="M225 423L230 390" stroke="#0080ff"/></g>
          <path d="M190 401L201 402L195 410Z" fill="#0f0"/><path d="M260 409L250 408L254 415Z" fill="#f00"/><path d="M231 381L234 393L226 392Z" fill="#0080ff"/>
          <path d="M202 396L206.500 401L211 396M206.500 401V406" fill="none" stroke="#0f0"/><path d="M239 399L248 408M248 399L239 408" stroke="#f00"/><path d="M221 378.500H230L221 388.500H230" fill="none" stroke="#0080ff"/>
        </svg>
        <div class="dlg">
          <h2>钢筋显示控制面板</h2>
          <div class="opts">
            <label><input type="checkbox" checked>水平纵筋</label>
            <label><input type="checkbox" checked>横向钢筋</label>
            <label><input type="checkbox" checked>显示其它图元</label>
            <label><input type="checkbox" checked>显示详细公式</label>
          </div>
        </div>
      </div>

      <div class="row snapbar">
        <div class="bar">
          <i class="grip"></i>
          <button class="t"><svg class="i"><use href="#ortho"/></svg>正交</button>
          <button class="t on"><svg class="i"><use href="#snap"/></svg>对象捕捉</button>
          <button class="t on"><svg class="i"><use href="#dyn"/></svg>动态输入</button>
        </div>
        <div class="bar">
          <i class="grip"></i>
          <button class="t"><svg class="i"><use href="#cross"/></svg>交点</button>
          <button class="t on"><svg class="i"><use href="#perp"/></svg>垂点</button>
          <button class="t on"><svg class="i"><use href="#mid"/></svg>中点</button>
          <button class="t"><svg class="i"><use href="#vert"/></svg>顶点</button>
          <button class="t"><svg class="i"><use href="#coord"/></svg>坐标</button>
        </div>
        <div class="bar num">
          <i class="grip"></i>
          <span class="combo w1"><select aria-label="偏移方式"><option>不偏移</option></select></span><i class="sep"></i>
          <label for="ox">X=</label><span class="spin"><input id="ox" value="0"><svg viewBox="0 0 8 18"><path d="M1 5L4 1L7 5ZM1 13L4 17L7 13Z" fill="#555"/></svg></span><span>mm</span>
          <label for="oy">Y=</label><span class="spin"><input id="oy" value="0"><svg viewBox="0 0 8 18"><path d="M1 5L4 1L7 5ZM1 13L4 17L7 13Z" fill="#555"/></svg></span><span>mm</span><i class="sep"></i>
          <label class="rotl"><input type="checkbox">旋转</label><span class="spin wide"><input aria-label="旋转角度" value="0.000"><svg viewBox="0 0 8 18"><path d="M1 5L4 1L7 5ZM1 13L4 17L7 13Z" fill="#555"/></svg></span><span>°</span>
        </div>
      </div>

      <div class="pane">
        <div class="dots"><button aria-label="关闭面板"><svg viewBox="0 0 10 10"><rect x=".5" y=".5" width="9" height="9" fill="#fff" stroke="#333"/><path d="M2 2L8 8M8 2L2 8" stroke="#300" stroke-width="1.600"/></svg></button></div>
        <div class="gp">
          <div class="bar gtb">
            <button class="nv" disabled aria-label="首条"><svg viewBox="0 0 12 12"><path d="M1 1H3V11H1ZM11 1V11L4 6Z" fill="#c2c2c2"/></svg></button>
            <button class="nv" disabled aria-label="上一条"><svg viewBox="0 0 12 12"><path d="M9 1V11L2 6Z" fill="#c2c2c2"/></svg></button>
            <button class="nv" aria-label="下一条"><svg viewBox="0 0 12 12"><path d="M3 1V11L10 6Z" fill="#2f6fe0"/></svg></button>
            <button class="nv" aria-label="末条"><svg viewBox="0 0 12 12"><path d="M1 1V11L8 6ZM9 1H11V11H9Z" fill="#2f6fe0"/></svg></button><i class="sep"></i>
            <button class="nv" disabled aria-label="上移"><svg viewBox="0 0 12 12"><path d="M6 1L11 6H8V11H4V6H1Z" fill="#c2c2c2"/></svg></button>
            <button class="nv" aria-label="下移"><svg viewBox="0 0 12 12"><path d="M6 11L11 6H8V1H4V6H1Z" fill="#2f6fe0"/></svg></button><i class="sep"></i>
            <button class="t" disabled><svg class="i"><use href="#gins"/></svg>插入</button>
            <button class="t" disabled><svg class="i"><use href="#gdel"/></svg>删除</button>
            <button class="t" disabled><svg class="i"><use href="#gscale"/></svg>缩尺配筋</button>
            <button class="t"><svg class="i"><use href="#info"/></svg>钢筋信息</button>
            <button class="t"><svg class="i"><use href="#lib"/></svg>钢筋图库</button>
            <button class="t"><svg class="i"><use href="#other"/></svg>其他<i class="car n"></i></button>
            <button class="t cl">关闭</button><i class="sep"></i>
            <span class="total">单构件钢筋总重(kg)：13.993</span>
          </div>
          <div class="grid">
            <div class="tw">
              <table>
                <colgroup><col class="k33"><col class="k73"><col class="k56"><col class="k36"><col class="k33"><col class="k201"><col class="k166"><col class="k156"><col class="k61"><col class="k38"><col class="k39"><col class="k49"><col class="k61"><col class="k61"><col class="k71"><col class="k73"></colgroup>
                <thead><tr><th></th><th>筋号</th><th class="cur">直径<span class="m">(mm)</span></th><th>级别</th><th>图号</th><th>图形</th><th>计算公式</th><th>公式描述</th><th>长度<span class="m">(mm)</span></th><th>根数</th><th>搭接</th><th>损耗<span class="m">(%)</span></th><th>单重<span class="m">(kg)</span></th><th>总重<span class="m">(kg)</span></th><th>钢筋归类</th><th>搭接形式</th></tr></thead>
                <tbody>
                  <tr class="a g"><th class="cur"><span class="m">1*</span></th><td class="bl">横向钢筋<span class="m">.1</span></td><td class="m hit">8</td><td class="c"><svg class="gr"><use href="#grade"/></svg></td><td class="m">0</td>
                    <td class="sh"><svg viewBox="0 0 200 52"><path d="M21 17V8H180V49" fill="none" stroke="#000" stroke-width="2"/><text x="72" y="27">1158</text><text transform="translate(27 2) rotate(90)">70</text><text transform="translate(167 7) rotate(90)">300</text></svg></td>
                    <td class="m">1228+300</td><td>净长<span class="m">+</span>端头</td><td class="m">1528</td><td class="m">17</td><td class="m">0</td><td class="m">0</td><td class="m">0.604</td><td class="m">10.261</td><td>直筋</td><td>绑扎</td></tr>
                  <tr class="b g"><th><span class="m">2</span></th><td class="bl">水平纵筋<span class="m">.1</span></td><td class="m">8</td><td class="c"><svg class="gr"><use href="#grade"/></svg></td><td class="m">1</td>
                    <td class="sh"><svg viewBox="0 0 200 28"><path d="M23 19H173" stroke="#000" stroke-width="2"/><text x="89" y="16" fill="#f00">1575</text></svg></td>
                    <td class="m">1575</td><td>净长</td><td class="m">1575</td><td class="m">6</td><td class="m">0</td><td class="m">0</td><td class="m">0.622</td><td class="m">3.733</td><td>直筋</td><td>绑扎</td></tr>
                  <tr class="d"><th><span class="m">3</span></th><td class="bl"></td><td></td><td></td><td></td><td></td><td></td><td></td><td></td><td></td><td></td><td></td><td></td><td></td><td></td><td></td></tr>
                </tbody>
              </table>
            </div>
            <div class="scroll"><svg viewBox="0 0 10 10"><path d="M6.500 1.500L3 5L6.500 8.500" fill="none" stroke="#444" stroke-width="1.800"/></svg><div class="track"><div class="thumb"></div></div><svg viewBox="0 0 10 10"><path d="M3.500 1.500L7 5L3.500 8.500" fill="none" stroke="#444" stroke-width="1.800"/></svg></div>
          </div>
        </div>
      </div>
    </section>
  </div>

  <footer class="status">
    <span class="s1 m">X=83244 Y=4938</span><span class="s2">层高<span class="m">:4.5m</span></span><span class="s3">底标高<span class="m">:-0.05m</span></span><span class="s4 m">1(1)</span><span class="s5"></span><span class="s6 m">318.8 FPS</span>
  </footer>

  <div class="task">
    <button class="start" aria-label="开始"><svg viewBox="0 0 16 16"><path d="M0 2.300L6.500 1.300V7.500H0ZM7.500 1.200L16 0V7.500H7.500ZM0 8.500H6.500V14.700L0 13.700ZM7.500 8.500H16V16L7.500 14.800Z" fill="#fff"/></svg></button>
    <label class="search"><svg viewBox="0 0 22 22"><circle cx="11" cy="11" r="9" fill="none" stroke="#fff" stroke-width="2.600"/></svg><input placeholder="在这里输入你要搜索的内容" aria-label="搜索"><svg class="mic" viewBox="0 0 12 18"><rect x="3.500" y="1" width="5" height="10" rx="1.500" fill="none" stroke="#aaa"/><path d="M1 8V13H11V8M6 13V17M3.500 16.500H8.500" fill="none" stroke="#aaa"/></svg></label>
    <button class="k wl" aria-label="任务视图"><svg viewBox="0 0 24 24"><path d="M6.500 6.500H17.500V18.500H6.500ZM4 7.500H2.500V17.500H4M20 7.500H21.500V17.500H20" fill="none" stroke="#fff" stroke-width="1.200"/></svg></button>
    <button class="k wl" aria-label="风扇"><svg viewBox="0 0 24 24"><rect x="1" y="1" width="22" height="22" rx="7" fill="#e8e8e8"/><path d="M12 12Q14 5 9 1M12 12Q19 12 23 7M12 12Q17 17 14 23M12 12Q8 15 9 22M12 12Q6 15 1 11M1 17Q6 20 9 16M15 2Q11 5 14 9M22 13Q18 12 16 15" fill="none" stroke="#010b0e" stroke-width="1.500"/></svg></button>
    <button class="k wl" aria-label="浏览器"><svg viewBox="0 0 24 24"><path d="M20 16Q17 21 12 20Q6 19 6 12Q7 5 13 5Q19 6 19 12H8" fill="none" stroke="#eee" stroke-width="3.600"/><path d="M4 22Q0 20 6 11Q13 3 21 1" fill="none" stroke="#eee" stroke-width="1.500"/></svg></button>
    <button class="k wl" aria-label="广联达"><svg viewBox="0 0 24 24"><path id="gg" d="M21 4Q16 6 12 4.500Q4 5 4 13Q5 20 12 20Q18 19 18 14Q16 9 12 11Q10 13 12 15" fill="none" stroke="#ddd" stroke-width="3.600"/><path d="M21 4Q16 6 12 4.500Q4 5 4 13Q5 20 12 20Q18 19 18 14Q16 9 12 11Q10 13 12 15" fill="none" stroke="#010b0e" stroke-width="1.600"/></svg></button>
    <button class="k wl" aria-label="Edge"><svg viewBox="0 0 24 24"><path d="M19 17.500Q9 23 7 14H21Q22 3 12 2Q4 2 2 10Q7 6 11 7.500Q5 10 6 16Q8 23 19 20.500ZM8 11Q9 7.500 12 7.500T15.500 11Z" fill="#0a78d6"/></svg></button>
    <button class="k" aria-label="IE"><svg viewBox="0 0 24 24"><path d="M20 16Q17 21 12 20Q6 19 6 12Q7 6 13 6Q19 7 19 12.500H8" fill="none" stroke="#49b4ef" stroke-width="3.800"/><path d="M4 22Q-1 20 5 11Q13 1 22 2Q23 3 21 7" fill="none" stroke="#f3c72d" stroke-width="2"/></svg></button>
    <button class="k" aria-label="资源管理器"><svg viewBox="0 0 24 24"><path d="M1 3H9L11 5H23V20H1Z" fill="#fbdc85"/><path d="M1 5H11" stroke="#e3a92c"/><path d="M5 21V13H19V21H15V17H9V21Z" fill="#38a8e0"/></svg></button>
    <button class="k run" aria-label="广联达云"><svg viewBox="0 0 24 24"><path d="M22 3Q17 6 12 4.500Q4 5 3.500 13Q5 20.500 12 20.500Q19 19 19 14Q17 9 12 11.500" fill="none" stroke="#18a4f2" stroke-width="4.400"/><path d="M5 17Q8 21 13 20" fill="none" stroke="#0f77d8" stroke-width="3"/></svg></button>
    <button class="k run" aria-label="绿色浏览器"><svg viewBox="0 0 24 24"><circle cx="12" cy="12" r="10.500" fill="#5db929" stroke="#def5ce"/><path d="M18 15Q14 20 9 16Q6 10 10 7Q17 5 17 12H8" fill="none" stroke="#fff" stroke-width="3"/></svg></button>
    <button class="k run" aria-label="记事"><svg viewBox="0 0 24 24"><rect x="1" y="1" width="22" height="22" rx="2" fill="#f29a1b" stroke="#ffc95e"/><path d="M3 5L15 3L18 20L6 21Z" fill="#fff4d8"/><path d="M6 9L14 8M6 12L14 11M7 15L14 14" stroke="#a97b32"/><path d="M10 17L20 2L22 4L12 18Z" fill="#8b3a13"/></svg></button>
    <button class="k run act" aria-label="GGJ"><svg viewBox="0 0 16 16"><use href="#app"/></svg></button>
    <span class="lk">链接</span>
    <span class="cpu">26%<br>CPU使用</span>
    <span class="fill"></span>
    <span class="ti"><svg viewBox="0 0 16 16"><path d="M2 11L8 5L14 11" fill="none" stroke="#fff" stroke-width="1.300"/></svg></span>
    <span class="ti"><svg viewBox="0 0 16 16"><path d="M5.500 5.500H14.500V12.500H4.500V10M15 8V10" fill="none" stroke="#fff"/><rect x="8" y="7" width="5" height="4" fill="#fff"/><path d="M1 3V6Q3 9 5 6V3M0 5H6M3 8V12" fill="none" stroke="#fff"/></svg></span>
    <span class="ti"><svg viewBox="0 0 16 16"><path d="M2 14Q2 5 13 2M5 14Q5 8 14 5M8 14Q9 10 14 8" fill="none" stroke="#bbb" stroke-width="1.300"/><circle cx="12" cy="13" r="2" fill="#fff"/></svg></span>
    <span class="ti"><svg viewBox="0 0 16 16"><path d="M1 6H4L7 3V13L4 10H1Z" fill="none" stroke="#fff"/><path d="M9 6Q11 8 9 10M11 4Q14 8 11 12M13 2.500Q17 8 13 13.500" fill="none" stroke="#ccc"/></svg></span>
    <span class="ti kb"><svg viewBox="0 0 24 14"><rect x="1" y="1" width="22" height="12" fill="none" stroke="#fff"/><path d="M4 4.500H20M4 7H20" stroke="#fff" stroke-dasharray="1 1"/><path d="M6 10H18" stroke="#fff"/></svg></span>
    <span class="ti zh">中</span>
    <span class="ti kb"><svg class="sg" viewBox="0 0 26 26"><use href="#sogou"/></svg></span>
    <time>12:45<br>2018/2/1</time>
    <button class="nt" aria-label="通知"><svg viewBox="0 0 26 26"><path d="M1 3H17V16H9L5 20V16H1Z" fill="#fff"/><path d="M3 6.500H15M3 9.500H15M3 12.500H10" stroke="#000"/></svg><b>21</b></button>
  </div>
</div>
</body>
</html>
```
FILE: styles.css
```css
* { box-sizing: border-box; }
html, body { margin: 0; height: 100%; }
body { font: 12px/16px "Noto Sans", "Noto Sans CJK SC", sans-serif; color: #000; background: #efefef; overflow: hidden; }
button, input, select { font: inherit; color: inherit; margin: 0; padding: 0; border: 0; background: none; border-radius: 0; }
h1, h2, ul { margin: 0; padding: 0; font: inherit; list-style: none; }
a { color: inherit; text-decoration: none; }
svg { display: block; flex: none; }
.defs { position: absolute; width: 0; height: 0; }
.i { width: 16px; height: 16px; }
.m { font-family: "DejaVu Sans Mono", monospace; font-size: 10px; }
.app { height: 100vh; display: flex; flex-direction: column; white-space: nowrap; }

.title { position: relative; flex: none; height: 23px; background: #fff; display: flex; align-items: center; padding-left: 2px; gap: 5px; }
.title h1 { flex: 1; }
.la { font-family: Roboto, sans-serif; font-size: 13px; }
.winbtns { display: flex; }
.winbtns button { width: 46px; height: 20px; display: grid; place-items: center; }
.winbtns svg { width: 12px; height: 12px; }
.ball { position: absolute; left: 705px; top: -29px; width: 48px; height: 48px; border-radius: 50%; background: radial-gradient(#6bdc7c, #35b04c); border: 2px solid #999; box-shadow: 0 2px 6px #0006; color: #fff; font-weight: bold; text-align: center; padding-top: 26px; z-index: 3; }
.ime { position: absolute; left: 999px; top: 3px; height: 24px; background: #fff; border: 1px solid #b3c4d8; display: flex; align-items: center; gap: 6px; padding: 0 3px 0 0; color: #1a72c9; z-index: 3; }
.ime .s { width: 28px; height: 28px; }
.ime b { font-size: 14px; }

.row { display: flex; flex: none; gap: 3px; }
.bar { display: flex; align-items: center; gap: 1px; padding: 0 3px 0 0; background: linear-gradient(#fdfdfd, #efefef); }
.grow { flex: 1; }
.t { display: flex; align-items: center; gap: 4px; height: 22px; padding: 0 3px; flex: none; }
.t:disabled { color: #8b8b8b; }
.on { background: #dcebf7; box-shadow: inset 0 0 0 1px #1680d8; }
.car { flex: none; width: 6px; height: 3px; margin-left: 2px; background: #111; clip-path: polygon(0 0, 100% 0, 50% 100%); }
.car.n { margin-left: -1px; }
.t:disabled .car { background: #888; }
.sep { flex: none; width: 5px; height: 16px; border-right: 1px solid #b5b5b5; }
.grip { flex: none; width: 3px; height: 17px; margin: 0 1px 0 4px; background: repeating-linear-gradient(#aaa 0 2px, transparent 2px 5px); }
.bar + .bar .grip { margin: 0 0 0 2px; }
.more { font: bold 14px/16px "Liberation Sans", sans-serif; width: 12px; height: 24px; display: flex; margin-left: auto; }

.menu { flex: none; height: 30px; display: flex; align-items: center; padding-left: 7px; gap: 11px; }
.menu > .t { margin-left: -4px; }
.menu .bar { height: 28px; margin-left: -6px; }
.menu .tip { padding: 0 30px; color: #2c6a00; width: 188px; }
.menu .acct { margin-left: -10px; padding-left: 2px; }
.beans { margin: 0 9px 0 4px; }

.r1 { height: 31px; padding-bottom: 2px; }
.r1 .bar { padding-left: 4px; height: 28px; }
.r1 .bar:first-child { width: 151px; padding-right: 0; }
.r1 .b2 { width: 601px; padding-left: 0; padding-right: 2px; }
.r1 .grow { padding-left: 0; }

.main { flex: 1; min-height: 0; display: flex; gap: 4px; background: #f8f8f8; padding-bottom: 1px; }
.side { width: 166px; flex: none; display: flex; flex-direction: column; background: #efefef; font-family: "Noto Sans CJK SC", sans-serif; padding-right: 1px; }
.shead { height: 16px; flex: none; background: #0055e5; border-bottom: 1px solid #efefef; color: #fff; display: flex; align-items: center; margin-right: -1px; }
.shead span { flex: 1; }
.shead button { width: 18px; display: grid; place-items: center; }
.shead svg { width: 10px; height: 10px; }
.sb { flex: none; height: 22px; border: 1px solid; border-color: #fff #888 #888 #bbb; background: #efefef; padding-top: 1px; }
.sb.act { border: 1px solid #999; border-bottom: 2px solid #777; height: 24px; }
.stools { height: 27px; flex: none; display: flex; gap: 6px; padding: 5px 7px; background: linear-gradient(#fff, #efefef); }
.stools svg { width: 16px; height: 16px; }
.tree { flex: 1; min-height: 0; margin: 0 0 1px 2px; border: 1px solid #828790; background: #fff; overflow: hidden; }
.tree .n { display: flex; align-items: center; height: 16px; padding-left: 7px; }
.cv { width: 10px; height: 10px; margin-right: 6px; }
.tree .n .i { margin-right: 4px; }
.tree li.open { background: repeating-linear-gradient(#888 0 1px, transparent 1px 2px) 12px 16px / 1px 100% no-repeat; }
.tree ul { margin-left: 31px; background: repeating-linear-gradient(#888 0 1px, transparent 1px 2px) 0 0 / 1px calc(100% - 8px) no-repeat; }
.tree ul li { display: flex; align-items: center; height: 16px; padding-left: 11px; background: repeating-linear-gradient(90deg, #888 0 1px, transparent 1px 2px) 0 8px / 10px 1px no-repeat; }
.tree ul .i { margin-right: 4px; }
.sel { display: flex; align-items: center; background: #d7d7d7; height: 16px; }
.tree em { font: bold 8px/9px "DejaVu Sans", sans-serif; background: #ffd800; align-self: flex-start; }
.tree .n .bk2 { margin: 0 0 0 5px; }
.tree ul .bk { margin-right: 0; }

.work { flex: 1; min-width: 0; display: flex; flex-direction: column; background: #efefef; }
.r2 { height: 27px; }
.r3 { height: 28px; }
.r4 { height: 29px; padding-top: 1px; }
.r4 .empty { width: 30px; }
.combo { display: flex; align-items: center; height: 22px; background: linear-gradient(90deg, #fff calc(100% - 12px), #f5f5f5 0); margin-right: 1px; }
.combo::after { content: ""; flex: none; width: 6px; height: 3px; margin-right: 3px; background: #111; clip-path: polygon(0 0, 100% 0, 50% 100%); }
.combo select { appearance: none; flex: 1; min-width: 0; padding-left: 2px; }
.w1 { width: 57px; }
.w2 { width: 70px; }

.view { flex: 1; min-height: 0; position: relative; overflow: hidden; background: #990; }
.scene { width: 100%; height: 100%; }
.ax { font: 14px "DejaVu Sans Mono", monospace; fill: #ddd; }
.dlg { position: absolute; left: 9px; top: 1px; width: 168px; height: 180px; background: #fff; border: 1px solid #8a8a8a; box-shadow: 0 2px 8px #0007; display: flex; flex-direction: column; }
.dlg h2 { color: #999; padding: 8px 8px 7px; }
.opts { flex: 1; margin: 0 1px 1px; border: 1px solid #828790; border-top-width: 2px; display: flex; flex-direction: column; padding: 1px 3px; }
.opts label { height: 12px; line-height: 12px; display: flex; align-items: center; gap: 3px; font-family: "Noto Sans CJK SC", sans-serif; }
input[type=checkbox] { appearance: none; width: 11px; height: 11px; border: 1px solid #888; background: #fff; flex: none; display: grid; place-items: center; }
input[type=checkbox]:checked::before { content: ""; width: 7px; height: 4px; border: solid #444; border-width: 0 0 1px 1px; transform: translateY(-1px) rotate(-45deg); }

.snapbar { height: 34px; padding: 1px 0 2px; }
.snapbar .bar { padding-bottom: 1px; }
.snapbar .on + .on { margin-left: -1px; }
.num { color: #808080; }
.num > span:not(.combo, .spin) { margin: 0 1px; }
.num > label { margin: 0 1px; }
.num .combo { color: #000; }
.spin { display: flex; align-items: center; width: 58px; height: 22px; border: 1px solid #7a7a7a; padding-right: 4px; background: #f4f4f4; }
.spin.wide { width: 69px; }
.spin input { flex: 1; min-width: 0; text-align: right; padding-right: 8px; }
.spin svg { width: 8px; height: 16px; }
.num .rotl { display: flex; align-items: center; gap: 8px; color: #444; }
.rotl input { background: #f4f4f4; }

.pane { flex: none; display: flex; }
.dots { width: 12px; flex: none; padding-left: 1px; background: radial-gradient(circle at 1px 1px, #aaa 1px, transparent 1px) 2px 14px / 5px 5px; }
.dots button, .dots svg { display: block; width: 10px; height: 10px; }
.gp { flex: 1; min-width: 0; }
.gtb { height: 26px; }
.nv { width: 23px; height: 20px; display: grid; place-items: center; }
.nv svg { width: 12px; height: 12px; }
.nv + .sep { width: 2px; margin-right: 1px; }
.gtb .cl { margin-left: 3px; }
.total { padding-left: 4px; }
.grid { border: 1px solid #a0a0a0; background: #fff; margin-right: 1px; padding: 1px; }
.tw { overflow: hidden; padding-bottom: 33px; }
table { border-collapse: separate; border-spacing: 0; table-layout: fixed; width: 1207px; font-family: "Noto Sans CJK SC", sans-serif; }
th, td { padding: 0 0 0 2px; text-align: left; border-right: 1px solid #bdbdbd; border-bottom: 1px solid #bdbdbd; overflow: hidden; font-weight: normal; }
td.m { font-size: 10px; }
th { text-align: center; padding: 0; background: linear-gradient(#fff, #eee); }
thead tr { height: 19px; }
.cur { background: #ffd28a; color: #60104c; }
thead .cur { background: linear-gradient(#fbd79a, #f0b755); }
.g td { background: #ccffdc; }
.g td.hit { background: #aeecda; }
.bl { border-right-color: #000; }
.a { height: 53px; }
.b { height: 29px; }
.d { height: 19px; }
.c .gr { width: 12px; height: 12px; margin: 0 auto; }
td.sh { padding: 0; }
.sh svg { width: 100%; }
.sh text { font: 10px "DejaVu Sans Mono", monospace; }
.k33 { width: 33px; }
.k73 { width: 73px; }
.k56 { width: 56px; }
.k36 { width: 36px; }
.k201 { width: 201px; }
.k166 { width: 166px; }
.k156 { width: 156px; }
.k61 { width: 61px; }
.k38 { width: 38px; }
.k39 { width: 39px; }
.k49 { width: 49px; }
.k71 { width: 71px; }
.scroll { display: flex; align-items: center; height: 15px; background: #f0f0f0; }
.scroll svg { width: 10px; height: 10px; margin: 0 4px; }
.track { flex: 1; height: 100%; }
.thumb { width: 72%; height: 100%; background: #cdcdcd; }

.status { flex: none; height: 22px; padding: 2px 0 1px; display: flex; gap: 2px; background: #f8f8f8; font-family: "Noto Sans CJK SC", sans-serif; }
.status > span { border: 1px solid #cfcfcf; padding-left: 1px; line-height: 18px; background: linear-gradient(#fff, #f0f0f0); }
.s1 { width: 148px; }
.s2 { width: 78px; }
.s3 { width: 98px; }
.s4 { width: 48px; }
.s5 { flex: 1; }
.s6 { width: 70px; }

.task { flex: none; height: 40px; display: flex; background: #010b0e; color: #fff; }
.start { width: 48px; background: #000; display: grid; place-items: center; }
.start svg { width: 16px; height: 16px; }
.search { width: 344px; background: #333; display: flex; align-items: center; padding: 0 14px 0 8px; gap: 6px; }
.search svg { width: 22px; height: 22px; }
.search input { flex: 1; min-width: 0; font-size: 14px; }
.search input::placeholder { color: #999; opacity: 1; }
.search .mic { width: 12px; height: 18px; }
.k { width: 48px; display: grid; place-items: center; }
.wl { width: 51px; }
.k svg { width: 24px; height: 24px; }
.run { box-shadow: inset 0 -2px #76b9ed; }
.act.run { background: #353f43; }
.lk { align-self: center; margin: 0 20px 0 13px; }
.cpu, .task time { align-self: center; text-align: center; line-height: 17px; }
.fill { flex: 1; }
.ti { width: 24px; display: grid; place-items: center; }
.ti svg { width: 16px; height: 16px; }
.ti.kb { width: 29px; }
.ti.kb svg { width: 24px; height: 14px; }
.ti.kb .sg { width: 16px; height: 16px; }
.ti.zh { width: 28px; font-size: 14px; }
.task time { width: 52px; margin-left: 12px; line-height: 19px; }
.nt { position: relative; width: 60px; background: #000; border-right: 1px solid #555; margin-right: 4px; padding-left: 22px; }
.nt svg { width: 26px; height: 26px; }
.nt b { position: absolute; left: 28px; top: 19px; width: 21px; height: 17px; border-radius: 9px; background: #333; border: 1px solid #777; line-height: 15px; text-align: center; }
```
